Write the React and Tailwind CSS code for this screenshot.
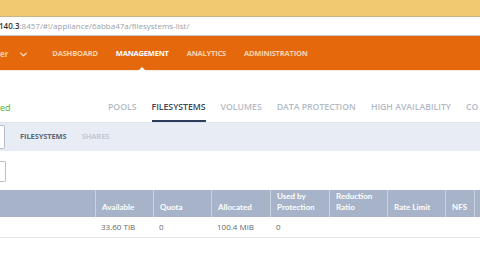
import { ChevronDown } from 'lucide-react';

export default function App() {
  // top nav
  const navItems = ['DASHBOARD', 'MANAGEMENT', 'ANALYTICS', 'ADMINISTRATION'];
  // storage tabs (last one is cut at the window edge)
  const tabs = ['POOLS', 'FILESYSTEMS', 'VOLUMES', 'DATA PROTECTION', 'HIGH AVAILABILITY', 'CO'];
  // table columns
  const columns = [
    { label: 'Available', width: 'w-[58px]' },
    { label: 'Quota', width: 'w-[58px]' },
    { label: 'Allocated', width: 'w-[59px]' },
    { label: 'Used by Protection', width: 'w-[59px]' },
    { label: 'Reduction Ratio', width: 'w-[58px]' },
    { label: 'Rate Limit', width: 'w-[58px]' },
    { label: 'NFS', width: 'w-[29px]' },
  ];
  const row = ['33.60 TiB', '0', '100.4 MiB', '0', '', '', ''];

  return (
    <div className="w-[480px] h-[279px] overflow-hidden bg-white font-['Open_Sans',sans-serif]">
      {/* browser chrome */}
      <div className="h-[17px] bg-[#f1c970] border-b border-[#c8b485]"></div>
      <div className="h-[19px] bg-white border-b border-[#c5cad3] flex items-center overflow-hidden">
        <span className="text-[8px] leading-none text-[#9aa0a8] whitespace-nowrap -ml-[1px]">
          <span className="text-[#333] font-semibold">140.3</span>:8457/#!/appliance/6abba47a/filesystems-list/
        </span>
      </div>

      {/* orange nav */}
      <div className="h-[34px] bg-[#e5690c] flex items-center pt-[2px] relative">
        <span className="text-[8px] font-bold text-[#f7cfa8]">er</span>
        <ChevronDown className="ml-[10px] text-[#fbe1c8] shrink-0" size={11} strokeWidth={3} />
        <div className="flex items-center gap-[18px] ml-[23px] whitespace-nowrap">
          {navItems.map((item) => (
            <span
              key={item}
              className={item === 'MANAGEMENT'
                ? 'text-[7.5px] font-bold text-white tracking-[-0.2px] relative'
                : 'text-[7.5px] font-bold text-[#f8d3b0] tracking-[-0.2px]'}
            >
              {item}
              {item === 'MANAGEMENT' && (
                <span className="absolute left-1/2 -translate-x-1/2 top-[19px] w-0 h-0 border-l-[4px] border-r-[4px] border-b-[4px] border-l-transparent border-r-transparent border-b-white"></span>
              )}
            </span>
          ))}
        </div>
      </div>

      {/* tabs */}
      <div className="h-[52px] flex items-end border-t border-[#fbeedd] overflow-hidden">
        <span className="inline-block shrink-0 text-[9px] text-[#4caf2a] w-[108px] pb-[8px]">ed</span>
        <div className="flex gap-[15px] whitespace-nowrap">
          {tabs.map((tab) => (
            <span
              key={tab}
              className={tab === 'FILESYSTEMS'
                ? 'text-[8.7px] font-semibold text-[#3a4556] pb-[6px] border-b-2 border-[#2e3d5a]'
                : 'text-[8.7px] font-semibold text-[#b3bac6] pb-[8px]'}
            >
              {tab}
            </span>
          ))}
        </div>
      </div>

      {/* sub tabs */}
      <div className="h-[29px] bg-[#e8edf5] border-t border-[#dde3ec] flex items-center">
        <div className="w-[5px] h-[24px] bg-white border border-l-0 border-[#b8bfca] rounded-r-[2px]"></div>
        <span className="ml-[15px] text-[7.5px] font-bold text-[#5c6675] tracking-[-0.1px]">FILESYSTEMS</span>
        <span className="ml-[15px] text-[7.5px] font-bold text-[#c3c9d2] tracking-[-0.1px]">SHARES</span>
      </div>

      {/* toolbar */}
      <div className="h-[39px] flex items-center">
        <div className="w-[6px] h-[21px] bg-white border border-l-0 border-[#b8bfca] rounded-r-[2px] mt-[1px]"></div>
      </div>

      {/* table */}
      <div className="flex h-[27px] bg-[#a6b3c9]">
        <div className="w-[96px] border-r border-[#c9d2e0]"></div>
        {columns.map((col) => (
          <div key={col.label} className={`${col.width} border-r border-[#c9d2e0] flex items-end px-[6px] pb-[4px]`}>
            <span className="text-[8px] font-bold text-white leading-[11px] font-['Lato',sans-serif]">{col.label}</span>
          </div>
        ))}
      </div>
      <div className="flex h-[21px] border-b border-[#e3e6ea]">
        <div className="w-[96px]"></div>
        {row.map((cell, i) => (
          <div key={i} className={`${columns[i].width} flex items-center px-[5px]`}>
            <span className="text-[8px] text-[#666]">{cell}</span>
          </div>
        ))}
      </div>
    </div>
  );
}
